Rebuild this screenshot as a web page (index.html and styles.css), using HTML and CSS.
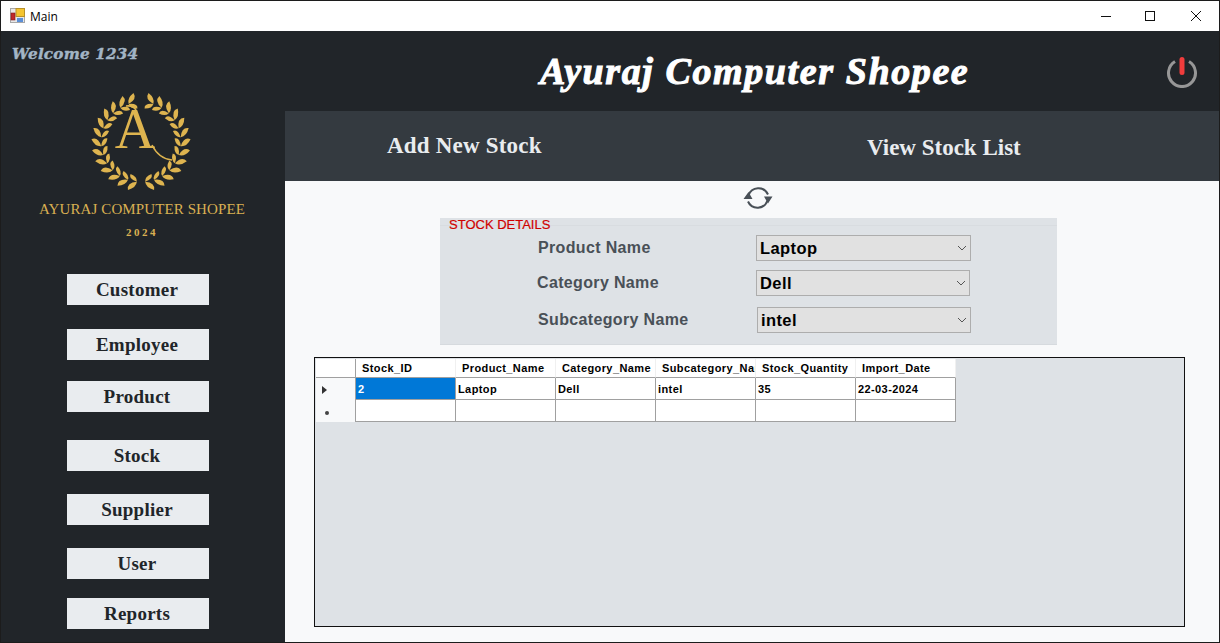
FILE: index.html
```html
<!DOCTYPE html>
<html lang="en">
<head>
<meta charset="utf-8">
<title>Main</title>
<link rel="stylesheet" href="styles.css">
</head>
<body>
<div class="window">
  <div class="titlebar">
    <svg class="app-icon" viewBox="0 0 16 16" width="16" height="16">
      <rect x="0.5" y="0.5" width="14" height="14" fill="#e8e8e8" stroke="#a8a8a8"/>
      <rect x="6" y="0.5" width="8.5" height="8" fill="#f4c430" stroke="#b8902a"/>
      <rect x="1" y="5" width="4" height="7" fill="#c0282a" stroke="#7d1a1a" stroke-width="0.6"/>
      <rect x="7" y="10" width="6" height="4" fill="#5b8fd8"/>
    </svg>
    <span class="window-title">Main</span>
    <div class="controls">
      <svg class="control" viewBox="0 0 12 12" width="12" height="12"><path d="M1 6.500h10" stroke="#111" fill="none"/></svg>
      <svg class="control control-max" viewBox="0 0 12 12" width="12" height="12"><rect x="1.500" y="1.500" width="9" height="9" stroke="#111" fill="none"/></svg>
      <svg class="control" viewBox="0 0 12 12" width="12" height="12"><path d="M1 1l10 10M11 1L1 11" stroke="#111" fill="none"/></svg>
    </div>
  </div>
  <div class="body">
    <aside class="sidebar">
      <div class="welcome">Welcome 1234</div>
      <svg class="wreath" viewBox="-50 -50 100 100" width="100" height="100">
        <defs>
          <g id="pair" fill="#deb44f">
            <path d="M0 40Q0 46-8 49Q-10 42 0 40Z"/>
            <path d="M0 40Q0 35-7 33Q-9 38 0 40Z"/>
          </g>
          <g id="branch">
            <use href="#pair" transform="rotate(6)"/>
            <use href="#pair" transform="rotate(19)"/>
            <use href="#pair" transform="rotate(32)"/>
            <use href="#pair" transform="rotate(45)"/>
            <use href="#pair" transform="rotate(58)"/>
            <use href="#pair" transform="rotate(71)"/>
            <use href="#pair" transform="rotate(84)"/>
            <use href="#pair" transform="rotate(97)"/>
            <use href="#pair" transform="rotate(110)"/>
            <use href="#pair" transform="rotate(123)"/>
            <use href="#pair" transform="rotate(136)"/>
            <use href="#pair" transform="rotate(149)"/>
            <use href="#pair" transform="rotate(162)"/>
          </g>
        </defs>
        <use href="#branch"/>
        <use href="#branch" transform="scale(-1 1)"/>
        <text class="wreath-letter" x="-6" y="6" text-anchor="middle">A</text>
        <path d="M-15 -36Q-8 -37 -5 -32M11 3Q18 17 31 18" fill="none" stroke="#deb44f" stroke-width="1.600"/>
      </svg>
      <div class="brand">AYURAJ COMPUTER SHOPEE</div>
      <div class="brand-year">2024</div>
      <nav class="menu">
        <button class="menu-btn">Customer</button>
        <button class="menu-btn">Employee</button>
        <button class="menu-btn">Product</button>
        <button class="menu-btn">Stock</button>
        <button class="menu-btn">Supplier</button>
        <button class="menu-btn">User</button>
        <button class="menu-btn">Reports</button>
      </nav>
    </aside>
    <main class="main">
      <header class="header">
        <h1 class="app-title">Ayuraj Computer Shopee</h1>
        <svg class="power" viewBox="0 0 34 38" width="34" height="38">
          <path d="M10 11.500A13.500 13.500 0 1 0 24 11.500" fill="none" stroke="#979797" stroke-width="3"/>
          <path d="M17 9.500V22.500" stroke="#f03c3c" stroke-width="5" stroke-linecap="round"/>
        </svg>
      </header>
      <div class="tabs">
        <div class="tab tab-add">Add New Stock</div>
        <div class="tab tab-view">View Stock List</div>
      </div>
      <section class="content">
        <div class="refresh-row">
          <svg viewBox="0 0 30 26" width="30" height="26">
            <path d="M5.500 10.500A10.500 10.500 0 0 1 25 9.500M24.500 15.500A10.500 10.500 0 0 1 5 16.500" fill="none" stroke="#495057" stroke-width="2"/>
            <path d="M0.500 14L5.500 7L9.500 14ZM21 11.500L29.500 11.500L25 18.500Z" fill="#495057"/>
          </svg>
        </div>
        <div class="details">
          <div class="legend"><span>STOCK DETAILS</span></div>
          <div class="field field-product">
            <label class="field-label">Product Name</label>
            <div class="combo"><span>Laptop</span>
              <svg viewBox="0 0 10 6" width="10" height="6"><path d="M1 1l4 4 4-4" fill="none" stroke="#555"/></svg></div>
          </div>
          <div class="field field-category">
            <label class="field-label">Category Name</label>
            <div class="combo"><span>Dell</span>
              <svg viewBox="0 0 10 6" width="10" height="6"><path d="M1 1l4 4 4-4" fill="none" stroke="#555"/></svg></div>
          </div>
          <div class="field field-subcategory">
            <label class="field-label">Subcategory Name</label>
            <div class="combo"><span>intel</span>
              <svg viewBox="0 0 10 6" width="10" height="6"><path d="M1 1l4 4 4-4" fill="none" stroke="#555"/></svg></div>
          </div>
        </div>
        <div class="grid-box">
          <table class="grid">
            <thead>
              <tr>
                <th class="row-head"></th>
                <th>Stock_ID</th>
                <th>Product_Name</th>
                <th>Category_Name</th>
                <th>Subcategory_Name</th>
                <th>Stock_Quantity</th>
                <th>Import_Date</th>
              </tr>
            </thead>
            <tbody>
              <tr>
                <td class="row-head"><span class="arrow"></span></td>
                <td class="selected">2</td>
                <td>Laptop</td>
                <td>Dell</td>
                <td>intel</td>
                <td>35</td>
                <td>22-03-2024</td>
              </tr>
              <tr>
                <td class="row-head"><span class="star"></span></td>
                <td></td><td></td><td></td><td></td><td></td><td></td>
              </tr>
            </tbody>
          </table>
        </div>
      </section>
    </main>
  </div>
</div>
</body>
</html>
```
FILE: styles.css
```css
* { box-sizing: border-box; }
html, body { margin: 0; padding: 0; }
body { width: 1220px; height: 643px; overflow: hidden; background: #fff; }

.window {
  width: 1220px; height: 643px;
  display: flex; flex-direction: column;
  border: 1px solid #1c1c1c;
  font-family: "Liberation Sans", Arial, sans-serif;
}

.titlebar {
  height: 30px; flex: none;
  display: flex; align-items: center;
  background: #fff;
  padding-left: 9px;
}
.app-icon { margin-right: 4px; margin-top: -1px; }
.window-title { font: 12px "Open Sans", "Noto Sans", sans-serif; color: #000; }
.controls { margin-left: auto; display: flex; gap: 33px; padding-right: 17px; }
.control-max { margin: 0 1px 0 -1px; }

.body { flex: 1; display: flex; min-height: 0; }

.sidebar {
  width: 284px; flex: none;
  background: #212529;
}
.welcome {
  padding: 14px 0 0 11px;
  height: 61px;
  font: italic bold 15.200px "DejaVu Serif", serif;
  letter-spacing: 0.2px;
  color: #a3b5c5;
  -webkit-text-stroke: 0.4px #a3b5c5;
}
.wreath { display: block; margin-left: 90px; }
.wreath-letter { font: 56px "Liberation Serif", serif; fill: #deb44f; }
.brand {
  margin-top: 9px;
  padding-right: 2px;
  text-align: center;
  font: 15px "Liberation Serif", serif;
  letter-spacing: 0.1px;
  color: #d9b052;
  white-space: nowrap;
}
.brand-year {
  margin-top: 8px;
  padding-right: 2px;
  text-align: center;
  font: bold 11px "Liberation Serif", serif;
  letter-spacing: 2.500px;
  color: #d9b052;
}
.menu {
  margin-top: 36px;
  margin-left: 66px;
  display: grid;
  grid-template-columns: 142px;
  grid-template-rows: 55px 52px 59px 54px 54px 50px 31px;
}
.menu-btn {
  height: 31px;
  padding: 0 2px 0 0;
  border: 0;
  background: #e9ecef;
  color: #212529;
  font: bold 19px "Liberation Serif", serif;
  letter-spacing: 0.25px;
}

.main { flex: 1; display: flex; flex-direction: column; min-width: 0; background: #f8f9fa; }

.header {
  height: 80px; flex: none;
  background: #212529;
  display: flex; align-items: center;
  padding-left: 255px;
  position: relative;
}
.app-title {
  margin: 0;
  font: italic bold 38px "Liberation Serif", serif;
  letter-spacing: 1.600px;
  color: #fff;
  -webkit-text-stroke: 1px #fff;
  white-space: nowrap;
}
.power { position: absolute; right: 20px; top: 19px; }

.tabs {
  height: 70px; flex: none;
  background: #343a40;
  display: grid;
  grid-template-columns: 480px 1fr;
  padding-left: 102px;
  align-items: center;
}
.tab {
  font: bold 23px "Liberation Serif", serif;
  color: #e9ecef;
  white-space: nowrap;
}
.tab-add { letter-spacing: 0.2px; }
.tab-view { padding-top: 4px; }

.content { flex: 1; display: flex; flex-direction: column; min-height: 0; }
.refresh-row { height: 37px; flex: none; display: flex; justify-content: center; align-items: center; padding: 0 0 3px 12px; }

.details {
  width: 617px; height: 127px;
  margin-left: 155px;
  background: #dee2e6;
  border-bottom: 1px solid #d6dade;
}
.legend {
  height: 8px;
  border-bottom: 1px solid #d8dce0;
  padding-left: 9px;
  font-size: 13px;
  line-height: 14px;
  color: #d00000;
  -webkit-text-stroke: 0.2px #d00000;
  margin-bottom: 9px;
}
.field { display: flex; align-items: center; height: 26px; }
.field-label {
  width: 218px;
  margin-left: 98px;
  font: bold 16px "Liberation Sans", sans-serif;
  color: #495057;
  letter-spacing: 0.35px;
}
.field-category { margin-top: 9px; }
.field-category .field-label { margin-left: 97px; width: 219px; }
.field-subcategory { margin-top: 11px; }
.field-subcategory .field-label { width: 219px; }

.combo {
  width: 215px; height: 26px;
  background: #e1e1e1;
  border: 1px solid #adadad;
  display: flex; align-items: center; justify-content: space-between;
  padding: 0 3px 0 3px;
  font: bold 16.500px "Liberation Sans", sans-serif;
  letter-spacing: 0.4px;
  color: #000;
}
.field-category .combo, .field-subcategory .combo { width: 214px; }

.grid-box {
  width: 871px; height: 270px;
  margin: 12px 0 0 29px;
  background: #dee2e6;
  border: 1px solid #111;
  padding: 1px;
}
.grid {
  border-collapse: separate;
  border-spacing: 0;
  table-layout: fixed;
  width: 640px;
  font: bold 11px "Liberation Sans", sans-serif;
  letter-spacing: 0.4px;
  color: #000;
  background: #fff;
}
.grid th, .grid td {
  width: 100px;
  padding: 0 2px;
  overflow: hidden;
  white-space: nowrap;
  text-align: left;
}
.grid th {
  height: 19px;
  padding-left: 6px;
  font-weight: bold;
  border-right: 1px solid #f0f0f0;
  border-bottom: 1px solid #a0a0a0;
}
.grid td {
  height: 22px;
  border-right: 1px solid #a0a0a0;
  border-bottom: 1px solid #a0a0a0;
}
.grid th.row-head, .grid td.row-head {
  width: 40px;
  padding: 0;
  text-align: center;
  border-right: 1px solid #a0a0a0;
}
.grid td.row-head { background: #f8f9fa; border-bottom: 0; }
.grid th.row-head { background: #fff; border-bottom: 1px solid #a0a0a0; }
.grid td.selected { background: #0078d7; color: #fff; }
.arrow {
  display: inline-block;
  margin-right: 22px;
  margin-top: 3px;
  width: 0; height: 0;
  border-left: 5px solid #333;
  border-top: 4px solid transparent;
  border-bottom: 4px solid transparent;
}
.star {
  display: inline-block;
  margin-right: 18px;
  margin-top: 3px;
  width: 4px; height: 4px;
  border-radius: 50%;
  background: #444;
}
```
